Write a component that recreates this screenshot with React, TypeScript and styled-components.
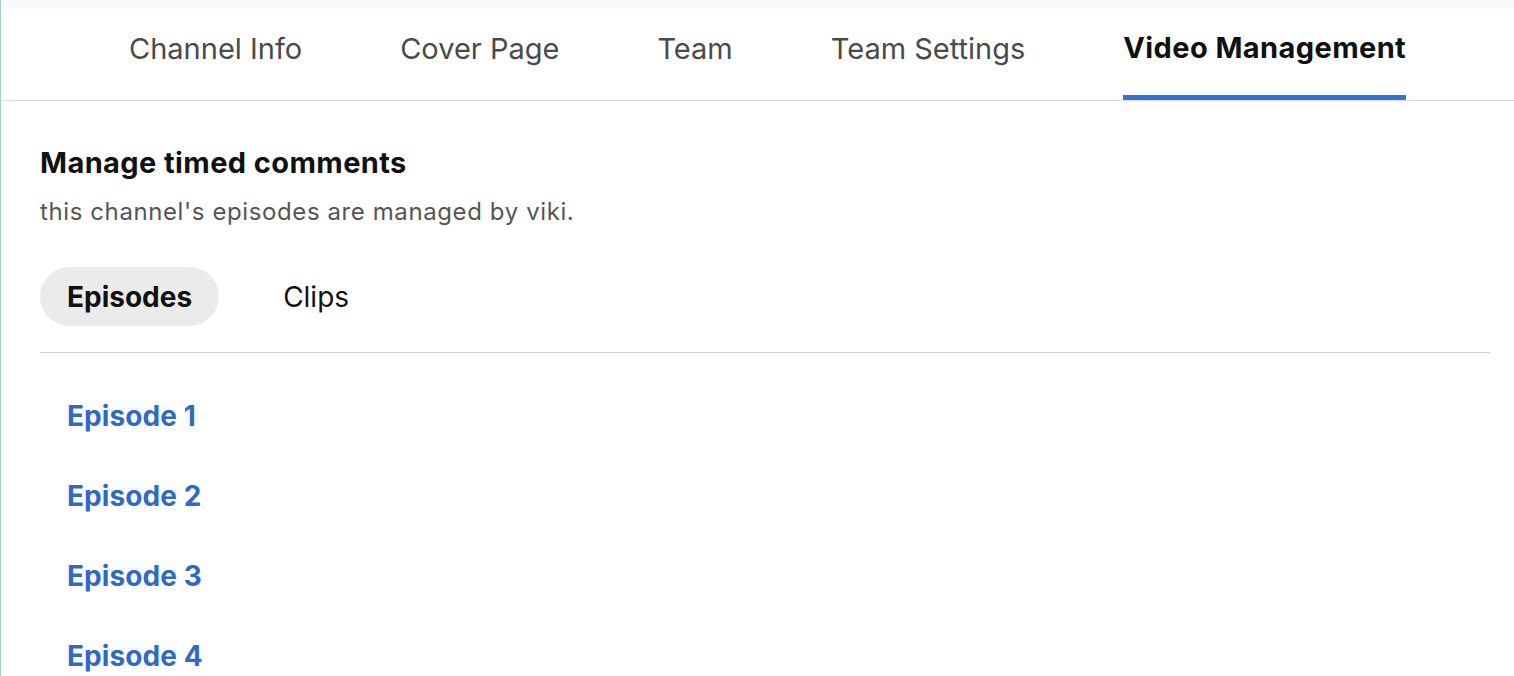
import React, {useState} from 'react';
import styled, {createGlobalStyle} from 'styled-components';

const GlobalStyle = createGlobalStyle`
  html, body {
    margin: 0;
    padding: 0;
    background: #ffffff;
  }
  body {
    font-family: Inter, "Noto Sans", sans-serif;
    -webkit-font-smoothing: antialiased;
  }
`;

const tabs = ['Channel Info', 'Cover Page', 'Team', 'Team Settings', 'Video Management'];
const episodes = ['Episode 1', 'Episode 2', 'Episode 3', 'Episode 4'];

const App = () => {
  const [activeTab, setActiveTab] = useState('Video Management');
  const [section, setSection] = useState('Episodes');
  return (
    <>
      <GlobalStyle />
      <Page>
        <TabBar>
          {tabs.map((tab) => (
            <Tab key={tab} active={tab === activeTab} onClick={() => setActiveTab(tab)}>
              {tab}
            </Tab>
          ))}
        </TabBar>
        <Content>
          <Title>Manage timed comments</Title>
          <Subtitle>this channel's episodes are managed by viki.</Subtitle>
          <PillRow>
            {['Episodes', 'Clips'].map((item) => (
              <Pill key={item} active={item === section} onClick={() => setSection(item)}>
                {item}
              </Pill>
            ))}
          </PillRow>
          <EpisodeList>
            {episodes.map((ep) => (
              <EpisodeLink key={ep} href="#">
                {ep}
              </EpisodeLink>
            ))}
          </EpisodeList>
        </Content>
      </Page>
    </>
  );
};

export default App;

const Page = styled.div`
  height: 676px;
  overflow: hidden;
  box-sizing: border-box;
  border-left: 1px solid #a9cbe2;
  background: linear-gradient(to bottom, #f7f7f7 0px, #ffffff 14px);
`;

const TabBar = styled.div`
  display: flex;
  align-items: flex-end;
  gap: 98px;
  height: 100px;
  padding-left: 128px;
  border-bottom: 1px solid #dcdcdc;
`;

const Tab = styled.div<{active?: boolean}>`
  display: flex;
  align-items: center;
  height: 100px;
  box-sizing: border-box;
  padding-top: ${(p) => (p.active ? '0' : '1px')};
  font-size: 29px;
  font-weight: ${(p) => (p.active ? 700 : 400)};
  color: ${(p) => (p.active ? '#111111' : '#4a4a4a')};
  letter-spacing: ${(p) => (p.active ? '0.4px' : '0')};
  border-bottom: 5px solid ${(p) => (p.active ? '#3572d3' : 'transparent')};
  cursor: pointer;
`;

const Content = styled.div`
  padding: 44px 24px 0 39px;
`;

const Title = styled.h2`
  margin: 0;
  font-size: 29px;
  font-weight: 700;
  line-height: 36px;
  color: #111111;
  letter-spacing: 0.4px;
`;

const Subtitle = styled.p`
  margin: 16px 0 0;
  font-size: 24px;
  line-height: 30px;
  color: #555555;
  letter-spacing: 0.6px;
`;

const PillRow = styled.div`
  display: flex;
  margin-top: 40px;
  padding-bottom: 26px;
  border-bottom: 1px solid #cfcfcf;
`;

const Pill = styled.div<{active?: boolean}>`
  display: flex;
  align-items: center;
  height: 59px;
  padding: 0 27px;
  border-radius: 30px;
  font-size: 28px;
  font-weight: ${(p) => (p.active ? 700 : 400)};
  color: #111111;
  background: ${(p) => (p.active ? '#ebebeb' : 'transparent')};
  margin-right: ${(p) => (p.active ? '37px' : '0')};
  cursor: pointer;
`;

const EpisodeList = styled.div`
  display: flex;
  flex-direction: column;
  gap: 44px;
  padding: 45px 0 0 27px;
`;

const EpisodeLink = styled.a`
  font-size: 28px;
  font-weight: 700;
  line-height: 36px;
  color: #2f6ac6;
  text-decoration: none;
  letter-spacing: 0.1px;
`;
